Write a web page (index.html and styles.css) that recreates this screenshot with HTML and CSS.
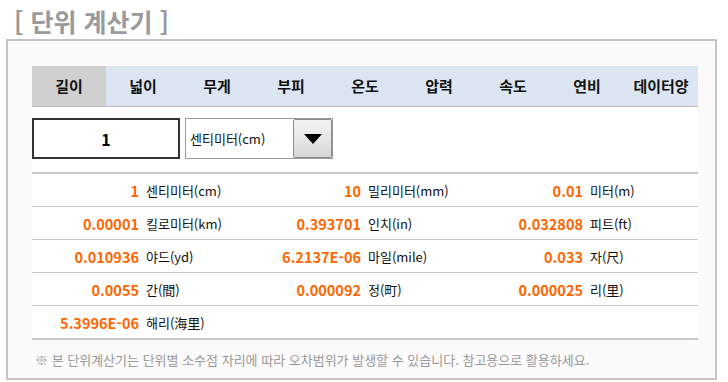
FILE: index.html
```html
<!DOCTYPE html>
<html lang="ko">
<head>
  <meta charset="UTF-8" />
  <meta name="viewport" content="width=device-width, initial-scale=1" />
  <title>단위 계산기</title>
  <link rel="stylesheet" href="styles.css">
</head>
<body>
  <h1 class="title">[ 단위 계산기 ]</h1>
  <div class="calc">
    <ul class="tabs">
      <li class="on">길이</li>
      <li>넓이</li>
      <li>무게</li>
      <li>부피</li>
      <li>온도</li>
      <li>압력</li>
      <li>속도</li>
      <li>연비</li>
      <li>데이터양</li>
    </ul>

    <div class="inputs">
      <input class="val" type="text" value="1" />
      <div class="select">
        <span class="select-text">센티미터(cm)</span>
        <span class="select-btn"><span class="arrow"></span></span>
      </div>
    </div>

    <div class="results">
      <div class="row">
        <div class="cell"><span class="num">1</span><span class="unit">센티미터(cm)</span></div>
        <div class="cell"><span class="num">10</span><span class="unit">밀리미터(mm)</span></div>
        <div class="cell"><span class="num">0.01</span><span class="unit">미터(m)</span></div>
      </div>
      <div class="row">
        <div class="cell"><span class="num">0.00001</span><span class="unit">킬로미터(km)</span></div>
        <div class="cell"><span class="num">0.393701</span><span class="unit">인치(in)</span></div>
        <div class="cell"><span class="num">0.032808</span><span class="unit">피트(ft)</span></div>
      </div>
      <div class="row">
        <div class="cell"><span class="num">0.010936</span><span class="unit">야드(yd)</span></div>
        <div class="cell"><span class="num">6.2137E-06</span><span class="unit">마일(mile)</span></div>
        <div class="cell"><span class="num">0.033</span><span class="unit">자(尺)</span></div>
      </div>
      <div class="row">
        <div class="cell"><span class="num">0.0055</span><span class="unit">간(間)</span></div>
        <div class="cell"><span class="num">0.000092</span><span class="unit">정(町)</span></div>
        <div class="cell"><span class="num">0.000025</span><span class="unit">리(里)</span></div>
      </div>
      <div class="row last">
        <div class="cell"><span class="num">5.3996E-06</span><span class="unit">해리(海里)</span></div>
        <div class="cell"></div>
        <div class="cell"></div>
      </div>
    </div>

    <p class="note">※ 본 단위계산기는 단위별 소수점 자리에 따라 오차범위가 발생할 수 있습니다. 참고용으로 활용하세요.</p>
  </div>
</body>
</html>
```

FILE: styles.css
```css
body {
  margin: 0;
  padding: 6px 11px 0 6px;
  font-family: 'Noto Sans CJK KR', 'Noto Sans', sans-serif;
  background: #ffffff;
}

.title {
  margin: 0;
  padding-left: 8px;
  height: 33px;
  font-size: 25px;
  line-height: 30px;
  font-weight: bold;
  color: #9a9a9a;
}

.calc {
  border: 2px solid #c4c4c4;
  background: #fcfafa;
  padding: 25px 17px 9px 24px;
}

.tabs {
  list-style: none;
  margin: 0;
  padding: 0;
  display: flex;
  background: #dce6f2;
  border-bottom: 1px solid #bcbcbc;
}

.tabs li {
  width: 74px;
  height: 40px;
  line-height: 40px;
  text-align: center;
  font-size: 15px;
  font-weight: bold;
  color: #111;
}

.tabs li.on {
  background: #d0d0d0;
}

.inputs {
  display: flex;
  gap: 5px;
  background: #fff;
  padding: 11px 0 13px;
}

.val {
  box-sizing: border-box;
  width: 148px;
  height: 41px;
  border: 2px solid #333;
  text-align: center;
  font-family: inherit;
  font-size: 16px;
  font-weight: bold;
  color: #000;
  outline: none;
}

.select {
  box-sizing: border-box;
  width: 148px;
  height: 41px;
  border: 1px solid #999;
  background: #fff;
  display: flex;
  align-items: center;
  justify-content: space-between;
}

.select-text {
  padding-left: 4px;
  font-size: 13px;
  color: #111;
}

.select-btn {
  box-sizing: border-box;
  width: 39px;
  height: 39px;
  border: 1px solid #8c8c8c;
  border-radius: 2px;
  background: linear-gradient(to bottom, #f4f4f4, #e4e4e4 60%, #d6d6d6);
  display: flex;
  align-items: center;
  justify-content: center;
}

.arrow {
  width: 0;
  height: 0;
  border-left: 9px solid transparent;
  border-right: 9px solid transparent;
  border-top: 10px solid #000;
}

.results {
  background: #fff;
  border-top: 2px solid #c8c8c8;
}

.row {
  display: flex;
  height: 32px;
  border-bottom: 1px solid #c8c8c8;
}

.row.last {
  border-bottom-width: 2px;
}

.cell {
  width: 222px;
  display: flex;
  align-items: center;
}

.num {
  width: 107px;
  text-align: right;
  font-size: 14.5px;
  font-weight: bold;
  color: #ff6600;
}

.unit {
  margin-left: 7px;
  font-size: 13px;
  color: #111;
}

.note {
  margin: 0;
  padding: 11px 0 0 3px;
  font-size: 13px;
  line-height: 18px;
  color: #999;
}
```
